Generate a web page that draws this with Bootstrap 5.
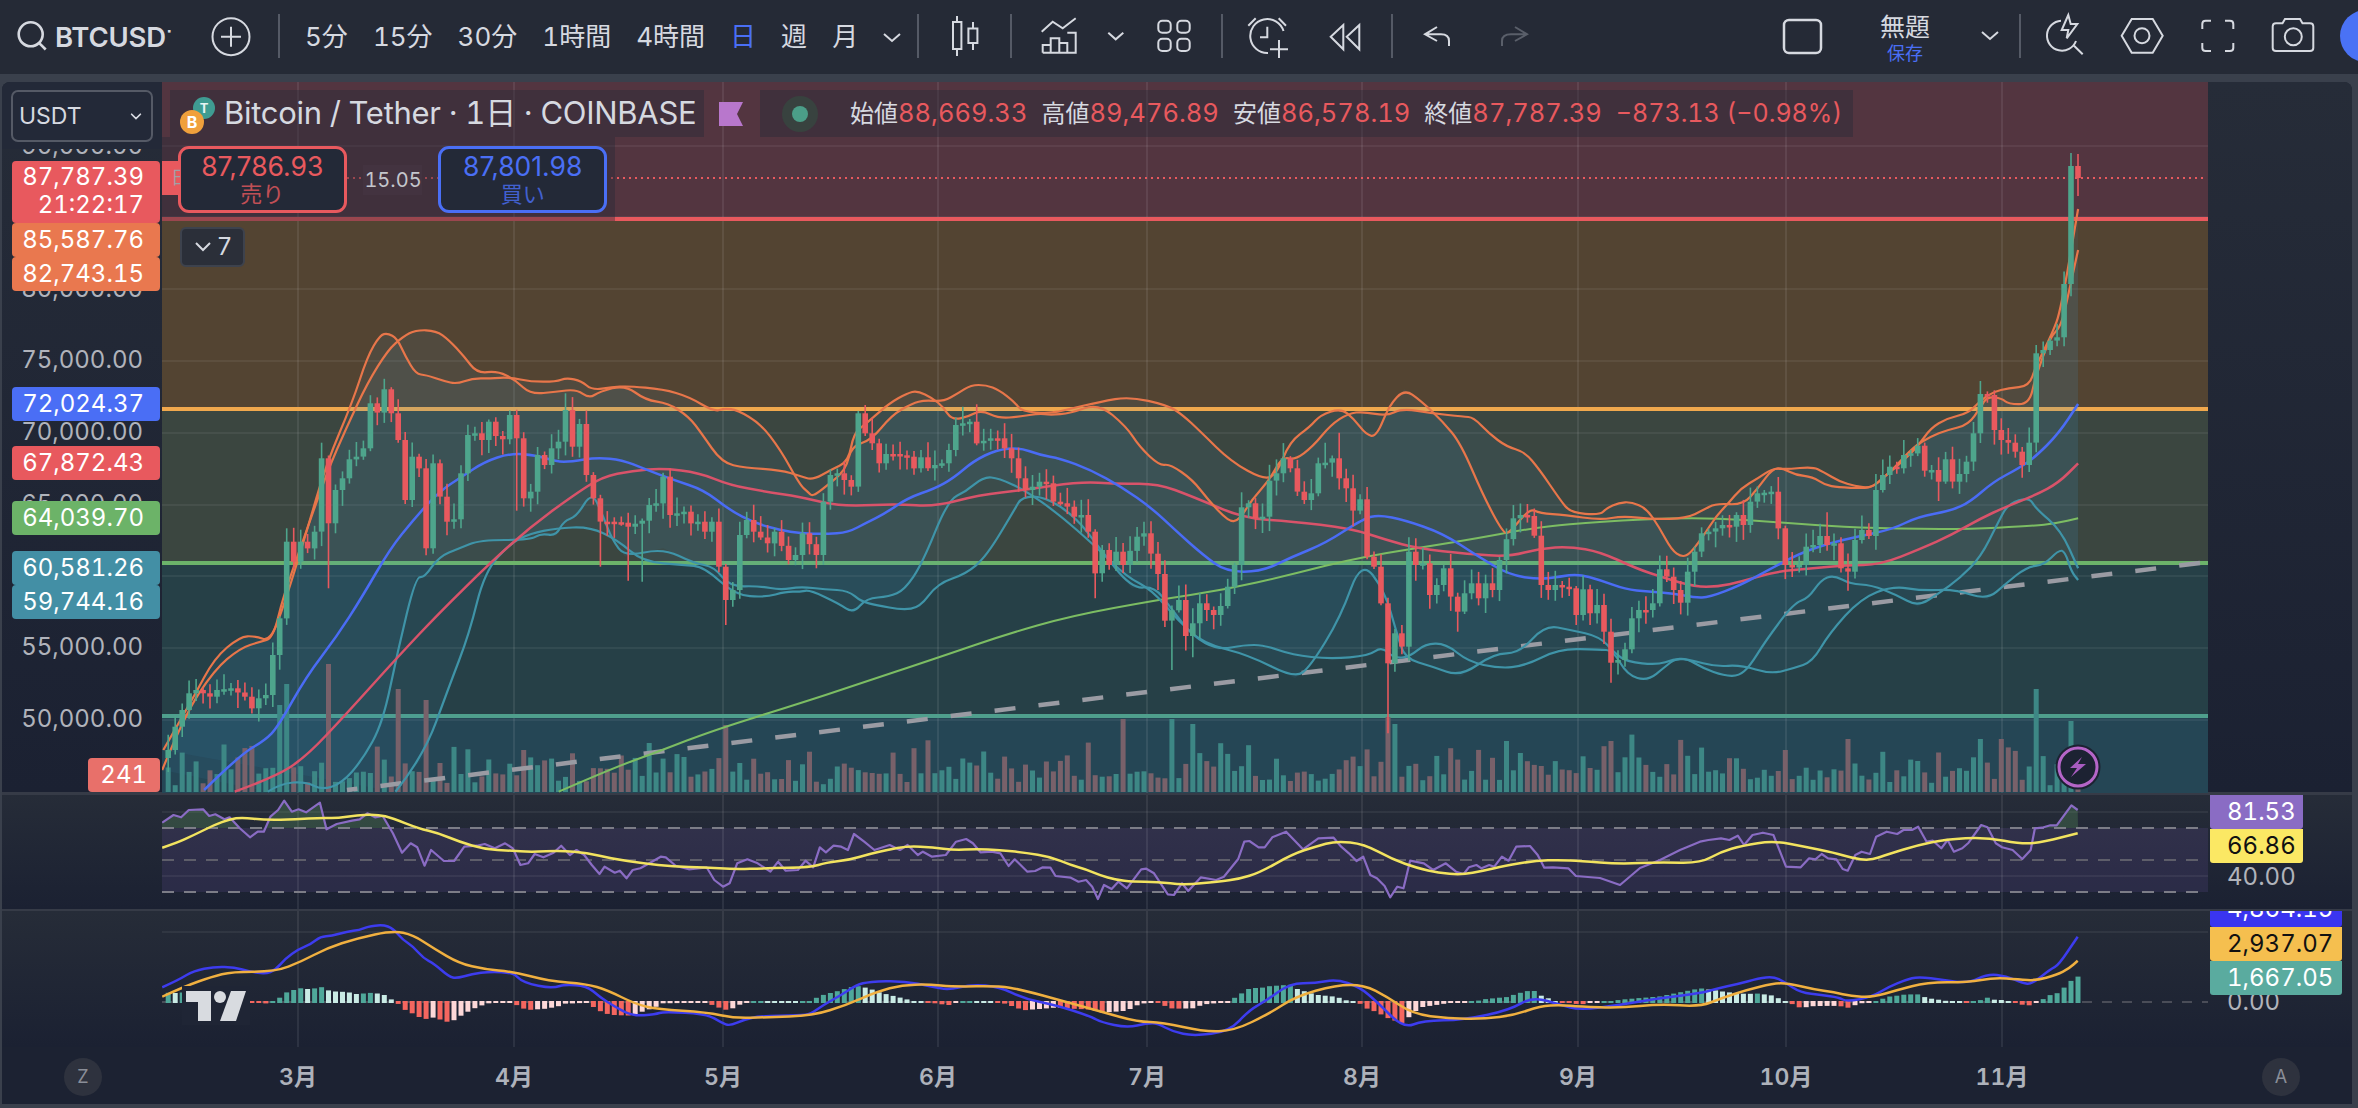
<!DOCTYPE html>
<html lang="ja">
<head>
  <meta charset="UTF-8">
  <title>BTCUSD Chart</title>
  <meta name="viewport" content="width=device-width, initial-scale=1">
  <link href="https://cdn.jsdelivr.net/npm/bootstrap@5.3.0/dist/css/bootstrap.min.css" rel="stylesheet">
  <style>
    body { background:#3a404c; overflow:hidden; height:1108px; font-family:Inter,"Noto Sans CJK JP",sans-serif; color:#d6d9e0; font-variant-numeric:tabular-nums; }
    .tb { height:74px; background:#252a36; overflow:hidden; flex-wrap:nowrap; justify-content:flex-start; padding:0; margin-bottom:8px; align-items:stretch; }
    .tb-ico { height:74px; fill:none; stroke:#d6d9e0; stroke-width:2; flex:none; }
    .tb-ico.dim { stroke:#5a5f6a; }
    .tb-sep { width:2px; height:44px; margin-top:14px; background:#555a66; flex:none; }
    .tb-sym { width:120px; font-size:27.5px; font-weight:600; line-height:74px; flex:none; letter-spacing:-.2px; }
    .tb-sym sup { font-size:9px; top:-1.5em; margin-left:1px; }
    .tb-tf { width:612px; flex:none; gap:25px; font-size:26px; line-height:74px; white-space:nowrap; }
    .tb-tf .on { color:#4a6ff5; }
    .tb-tf svg { margin-right:20px; }
    .tb-title { width:90px; flex:none; text-align:center; font-size:25px; line-height:1; padding-top:15px; }
    .tb-title span { display:block; font-size:18px; color:#4a6ff5; margin-top:5px; }
    .tb-ava { width:52px; height:52px; margin-top:10px; border-radius:50%; background:#4a72f5; flex:none; }
    .ml8{margin-left:8px}.ml17{margin-left:17px}.ml19{margin-left:19px}.ml23{margin-left:23px}.ml24{margin-left:24px}
    .ml25{margin-left:25px}.ml27{margin-left:27px}.ml28{margin-left:28px}.ml29{margin-left:29px}.ml30{margin-left:30px}
    .ml31{margin-left:31px}.ml33{margin-left:33px}.ml34{margin-left:34px}.ml36{margin-left:36px}.ml37{margin-left:37px}
    .ml38{margin-left:38px}.ml44{margin-left:44px}.ml252{margin-left:252px}

    .frame { width:2350px; height:1022px; margin-left:2px; border-radius:8px 8px 0 0; overflow:hidden; background:#1c2232; }
    .pane-row { display:flex; background:linear-gradient(#262c38,#1b2132); }
    .pane-main { height:710px; }
    .pane-rsi { height:117px; border-top:3px solid #363b47; }
    .pane-macd { height:138px; border-top:2px solid #363b47; }
    .pane-time { height:57px; background:#1c2232; }
    .ax-left { width:160px; flex:none; position:relative; overflow:hidden; }
    .ax-right { flex:1; position:relative; overflow:hidden; }
    .plot { width:2046px; flex:none; position:relative; }
    .plot svg { display:block; }
    .ax-text, .ax-tag { position:absolute; font-size:24px; line-height:34px; white-space:nowrap; }
    .ax-text { color:#b0b3bb; }
    .ax-left .ax-text { right:19px; }
    .ax-left .ax-tag { left:10px; width:148px; text-align:right; padding-right:16px; color:#fff; border-radius:4px; }
    .ax-right .ax-text { left:19px; }
    .ax-right .ax-tag { left:2px; padding-left:17px; color:#fff; border-radius:0 0 3px 3px; }
    .ax-tag.dark { color:#111; }
    .cur-wrap { position:absolute; left:0; top:0; width:160px; height:67px; background:#232938; z-index:3; padding:8px 0 0 9px; }
    .cur-select { width:142px; height:52px; background-color:#232938; border:2px solid #555a66; border-radius:7px; color:#d6d9e0; font-size:23px; padding:0 0 0 6px; background-position:right 8px center; background-size:14px;
      --bs-form-select-bg-img:url("data:image/svg+xml,%3csvg xmlns='http://www.w3.org/2000/svg' viewBox='0 0 16 16'%3e%3cpath fill='none' stroke='%23d6d9e0' stroke-linecap='round' stroke-width='2' d='m3 6 5 5 5-5'/%3e%3c/svg%3e"); }

    .legend-row { position:absolute; top:8px; left:8px; display:flex; height:47px; align-items:stretch; }
    .legend-box { background:rgba(37,42,55,.4); display:flex; align-items:center; white-space:nowrap; }
    .legend-title { width:534px; font-size:31px; padding-left:54px; position:relative; letter-spacing:-.3px; }
    .legend-title svg { position:absolute; left:8px; top:4px; }
    .legend-flag { width:24px; height:24px; margin:12px 17px 0 15px; flex:none; }
    .legend-ohlc { width:1093px; font-size:24px; position:relative; padding-left:90px; }
    .legend-ohlc svg { position:absolute; left:22px; top:6px; }
    .legend-ohlc b { font-weight:400; color:#e8595e; margin-right:14px; font-size:25.5px; }
    .legend-ohlc b.last { margin:0; font-size:25px; }
    .trade-row { position:absolute; top:55px; left:0; width:453px; height:84px; background:rgba(37,42,55,.4); display:flex; padding:9px 8px 0 16px; align-items:flex-start; }
    .trade-btn { width:169px; height:67px; padding:0; background:#232937; border-radius:11px; border:3px solid; font-size:26.5px; line-height:1.1; --bs-btn-hover-bg:#232937; }
    .trade-btn span { display:block; font-size:22px; line-height:26px; opacity:.8; }
    .trade-sell, .trade-sell:hover { border-color:#e8595e; color:#e8595e; }
    .trade-buy, .trade-buy:hover { border-color:#4a6ff5; color:#4a6ff5; }
    .trade-spread { width:92px; height:67px; display:flex; align-items:center; justify-content:center; font-size:20px; color:#c4c6cc; }
    .trade-spread span { background:#433340; padding:0 0 0 1px; }
    .trade-tag { position:absolute; left:0; top:24px; width:18px; height:34px; background:#e8595e; overflow:hidden; color:#a0a0a6; font-size:18px; line-height:34px; text-indent:9px; }
    .fold-btn { position:absolute; left:18px; top:145px; width:65px; height:40px; padding:0; background:#2b2f39; border:2px solid #3d424d; border-radius:6px; color:#d6d9e0; font-size:24px; line-height:1; display:flex; align-items:center; justify-content:center; gap:6px; --bs-btn-hover-bg:#2b2f39; --bs-btn-hover-color:#d6d9e0; --bs-btn-hover-border-color:#3d424d; }
    .time-text { position:absolute; top:13px; transform:translateX(-50%); font-size:23px; font-weight:600; color:#aeb2bb; white-space:nowrap; }
    .scale-mode { position:absolute; top:11px; width:38px; height:38px; border-radius:50%; background:#2e323e; color:#8a8e98; font-size:18px; line-height:38px; text-align:center; transform:translateX(-50%); }
  </style>
</head>
<body>

<!-- TOOLBAR -->
<nav class="navbar tb">
  <svg class="tb-ico ml17" width="30" viewBox="17 0 30 74"><circle cx="30.7" cy="34.3" r="12" stroke-width="2.6"/><path d="M39.5 43.3 45.7 49.5" stroke-width="2.6"/></svg>
  <div class="tb-sym ml8">BTCUSD<sup>▪</sup></div>
  <svg class="tb-ico ml36" width="40" viewBox="211 0 40 74"><circle cx="231" cy="36.7" r="18.5"/><path d="M221 36.7h20M231 26.7v20"/></svg>
  <div class="tb-sep ml27"></div>
  <div class="tb-tf d-flex ml25">
    <span>5分</span><span>15分</span><span>30分</span><span>1時間</span><span>4時間</span><span class="on">日</span><span>週</span><span>月</span>
    <svg class="tb-ico ms-auto" width="18" viewBox="879 0 18 74"><path d="M880 34l8 7 8-7"/></svg>
  </div>
  <div class="tb-sep"></div>
  <svg class="tb-ico ml31" width="30" viewBox="950 0 30 74"><rect x="953" y="22" width="8.4" height="27"/><path d="M957 16v6M957 49v7"/><rect x="968.4" y="28.5" width="9" height="14.5"/><path d="M973 22v6.5M973 43v7"/></svg>
  <div class="tb-sep ml30"></div>
  <svg class="tb-ico ml28" width="38" viewBox="1040 0 38 74"><path d="M1041.7 31.7 1052.7 21.7 1062.7 28.3 1075.7 18.3"/><path d="M1042.7 52.7V45H1050.7V52.7M1050.7 45V38.3H1059.3V52.7M1059.3 43H1067.3V52.7M1067.3 32.7H1075.7V52.7H1042.7"/></svg>
  <svg class="tb-ico ml28" width="20" viewBox="1106 0 20 74"><path d="M1108.3 32.7 1115.7 39.3 1123.3 32.7"/></svg>
  <svg class="tb-ico ml30" width="36" viewBox="1156 0 36 74"><rect x="1158.3" y="20.7" width="12.4" height="12" rx="4"/><rect x="1177.3" y="20.7" width="12.4" height="12" rx="4"/><rect x="1158.3" y="38.7" width="12.4" height="12.3" rx="4"/><rect x="1177.3" y="38.7" width="12.4" height="12.3" rx="4"/></svg>
  <div class="tb-sep ml29"></div>
  <svg class="tb-ico ml23" width="44" viewBox="1246 0 44 74"><path d="M1283.5 31A17 17 0 1 0 1268 53"/><path d="M1248.3 25.7 1255.7 18.3M1278.7 18.3 1286 25.7M1267.3 26.7V37.3H1260M1270 49.3H1288M1279 40V58"/></svg>
  <svg class="tb-ico ml38" width="34" viewBox="1328 0 34 74"><path d="M1343.3 25 1330.7 36.7 1343.3 49.3ZM1359.3 25 1346.7 36.7 1359.3 49.3Z"/></svg>
  <div class="tb-sep ml29"></div>
  <svg class="tb-ico ml29" width="30" viewBox="1422 0 30 74"><path d="M1437 27 1425 34.3 1437 41M1425 34.3H1441Q1449 34.3 1449 41V46"/></svg>
  <svg class="tb-ico dim ml44" width="34" viewBox="1496 0 34 74"><path d="M1515 27 1527 34.3 1515 41M1527 34.3H1511Q1502 34.3 1502 41V46"/></svg>
  <svg class="tb-ico ml252" width="41" viewBox="1782 0 41 74"><rect x="1784" y="20" width="37" height="33" rx="5" stroke-width="2.5"/></svg>
  <div class="tb-title ml37">無題<span>保存</span></div>
  <svg class="tb-ico ml30" width="20" viewBox="1980 0 20 74"><path d="M1982 32l8 7 8-7"/></svg>
  <div class="tb-sep ml19"></div>
  <svg class="tb-ico ml24" width="42" viewBox="2045 0 42 74"><path d="M2061 20.7A15 15 0 1 0 2076 41M2074 45.7 2082.7 54.3M2068.3 15 2061.7 30H2068.3L2066.7 38.3 2077.3 24H2070.7Z"/></svg>
  <svg class="tb-ico ml33" width="44" viewBox="2120 0 44 74"><path d="M2121.7 35.7 2131.7 19H2152.7L2162.7 35.7 2152.7 52.7H2131.7Z"/><circle cx="2142" cy="35.7" r="7.5"/></svg>
  <svg class="tb-ico ml36" width="36" viewBox="2200 0 36 74"><path d="M2202.3 29V24Q2202.3 20.7 2205.6 20.7H2211M2225 20.7H2230Q2233.3 20.7 2233.3 24V29M2233.3 43V48Q2233.3 51 2230 51H2225M2211 51H2205.6Q2202.3 51 2202.3 48V43"/></svg>
  <svg class="tb-ico ml34" width="45" viewBox="2270 0 45 74"><path d="M2276 23.3H2282.5L2285 19H2300L2302.5 23.3H2310Q2313.3 23.3 2313.3 26.6V48Q2313.3 51 2310 51H2276Q2272.7 51 2272.7 48V26.6Q2272.7 23.3 2276 23.3Z"/><circle cx="2293.3" cy="36.7" r="8.5"/></svg>
  <div class="tb-ava ml25"></div>
</nav>

<!-- CHART -->
<div class="frame">
  <div class="pane-row pane-main">
    <div class="ax-left" id="axMain">
      <div class="cur-wrap"><select class="form-select cur-select"><option>USDT</option></select></div>
    </div>
    <div class="plot">
      <div id="svgMain"></div>
      <div class="legend-row">
        <div class="legend-box legend-title">
          <svg width="46" height="42" viewBox="0 0 46 42"><circle cx="26" cy="14" r="11" fill="#3f9c92"/><text x="26" y="19" font-size="13" font-weight="700" fill="#e8f4f2" text-anchor="middle">T</text><circle cx="14" cy="28" r="12" fill="#f0a03c"/><text x="14" y="34" font-size="16" font-weight="700" fill="#fff" text-anchor="middle">B</text></svg>
          Bitcoin / Tether · 1日 · COINBASE
        </div>
        <svg class="legend-flag" viewBox="0 0 24 24"><path d="M0 0H24L18 12 24 24H0Z" fill="#b877cc"/></svg>
        <div class="legend-box legend-ohlc">
          <svg width="36" height="36" viewBox="0 0 36 36"><circle cx="18" cy="18" r="18" fill="#38423f"/><circle cx="18" cy="18" r="8" fill="#4b9e88"/></svg>
          始値<b>88,669.33</b>高値<b>89,476.89</b>安値<b>86,578.19</b>終値<b>87,787.39</b><b class="last">−873.13 (−0.98%)</b>
        </div>
      </div>
      <div class="trade-row">
        <div class="trade-tag">日</div>
        <button type="button" class="btn trade-btn trade-sell">87,786.93<span>売り</span></button>
        <div class="trade-spread"><span>15.05</span></div>
        <button type="button" class="btn trade-btn trade-buy">87,801.98<span>買い</span></button>
      </div>
      <button type="button" class="btn fold-btn"><svg width="18" height="12" viewBox="0 0 18 12" fill="none" stroke="#d6d9e0" stroke-width="2"><path d="M2 2l7 7 7-7"/></svg>7</button>
    </div>
    <div class="ax-right"></div>
  </div>

  <div class="pane-row pane-rsi">
    <div class="ax-left"></div>
    <div class="plot" id="svgRsi"></div>
    <div class="ax-right" id="axRsi"></div>
  </div>

  <div class="pane-row pane-macd">
    <div class="ax-left"></div>
    <div class="plot" id="svgMacd"></div>
    <div class="ax-right" id="axMacd"></div>
  </div>

  <div class="pane-row pane-time position-relative" id="axTime">
    <div class="scale-mode" id="modeZ">Z</div>
    <div class="scale-mode" id="modeA">A</div>
  </div>
</div>

<script src="https://cdn.jsdelivr.net/npm/bootstrap@5.3.0/dist/js/bootstrap.bundle.min.js"></script>

<script>
  // points were read off the reference, each list in its own crop scale
  const crop = (x0, sx, y0) => (list) => list.map(([a, b]) => [x0 + a / sx, y0 + b / 3]);
  const A = crop(0, 1.96, 300), B = crop(800, 1.96, 300), D = crop(1560, 2.376, 300);
  const R1 = crop(0, 1.96, 780), R2 = crop(780, 1.96, 790), R3 = crop(1700, 2.383, 700);

  const N = 275;
  const barX = (i) => 2078 - (N - 1 - i) * 6.97;
  const barOf = (x) => Math.max(0, Math.min(N - 1, Math.round((x - barX(0)) / 6.97)));
  let seed = 12345;
  const rnd = () => { seed = (seed * 16807) % 2147483647; return seed / 2147483647; };

  const RED = "#e8595e", GREEN = "#4ea58c";

  const closes = [
    ...A([[325,1350],[340,1280],[366,1180],[380,1170],[405,1190],[420,1170],[450,1165],[475,1190],[490,1225],[505,1195],[520,1185],[530,1065],[545,955],[557,725],[570,785],[583,725],[598,745],[612,695],[625,475],[640,670],[653,570],[665,535],[680,478],[695,470],[708,445],[720,310],[735,338],[750,268],[763,340],[777,420],[790,600],[803,470],[817,505],[830,745],[845,490],[858,590],[870,665],[883,658],[897,520],[912,405],[925,400],[940,420],[952,365],[966,408],[980,418],[993,345],[1007,415],[1020,595],[1035,575],[1048,465],[1062,495],[1075,445],[1090,425],[1103,330],[1117,440],[1130,372],[1143,400],[1156,525],[1170,665],[1184,585],[1197,665],[1211,668],[1225,770],[1238,680],[1252,662],[1266,615],[1280,610],[1293,530],[1307,550],[1320,645],[1335,635],[1348,670],[1362,665],[1376,695],[1390,665],[1403,800],[1417,900],[1430,870],[1444,705],[1457,655],[1470,660],[1484,695],[1498,730],[1512,780],[1525,695],[1540,780],[1554,765]]),
    ...B([[10,700],[26,765],[40,560],[52,605],[66,525],[80,520],[94,560],[108,340],[122,400],[135,430],[149,490],[162,462],[176,430],[189,462],[203,423],[216,470],[230,505],[243,472],[257,505],[270,495],[284,490],[298,450],[312,375],[326,350],[339,365],[353,430],[367,430],[380,415],[394,415],[408,520],[421,475],[435,535],[448,570],[462,560],[475,545],[489,550],[503,605],[516,610],[530,620],[543,650],[557,645],[570,695],[584,820],[598,750],[612,795],[626,755],[640,795],[654,810],[667,710],[681,700],[695,740],[708,822],[722,962],[736,975],[749,900],[763,1008],[775,970],[789,910],[802,930],[816,945],[830,918],[843,860],[857,795],[871,622],[884,610],[898,655],[912,650],[926,542],[940,520],[953,475],[967,505],[981,575],[995,600],[1008,580],[1022,490],[1035,488],[1048,475],[1062,535],[1075,565],[1089,632],[1103,598],[1116,770],[1130,800],[1144,910],[1157,1090],[1171,1000],[1185,1040],[1198,755],[1212,795],[1226,790],[1240,885],[1253,855],[1267,805],[1281,890],[1294,935],[1308,880],[1321,850],[1335,895],[1349,850],[1362,870],[1376,780],[1403,655],[1417,645],[1430,648],[1444,707],[1457,855],[1471,870],[1485,855],[1498,860]]),
    ...D([[9,860],[26,865],[42,945],[59,868],[76,940],[92,915],[109,995],[126,1088],[142,1080],[158,1048],[174,955],[190,930],[207,930],[223,910],[240,808],[257,830],[273,870],[290,908],[306,815],[323,755],[340,700],[356,695],[373,685],[389,675],[406,680],[423,645],[440,675],[456,605],[473,580],[489,578],[505,575],[521,685],[538,795],[554,800],[571,795],[587,740],[604,735],[620,708],[637,735],[654,730],[670,805],[687,815],[703,720],[720,690],[737,708],[753,570],[770,525],[786,500],[803,505],[820,465],[836,460],[852,437],[868,512],[885,510],[901,545],[918,478],[934,545],[950,522],[967,485],[984,400],[1000,282],[1017,285],[1033,390],[1050,420],[1067,428],[1084,455],[1100,495],[1117,428],[1133,160],[1150,150],[1167,122],[1183,112],[1200,-48],[1216,-402],[1231,-366]])
  ];
  const close = new Array(N).fill(null);
  closes.forEach(([x, y]) => { close[barOf(x)] = y; });
  close.forEach((v, i) => {
    if (v !== null) return;
    let a = i - 1, b = i + 1;
    while (b < N && close[b] === null) b++;
    close[i] = (close[a] + close[b]) / 2;
  });

  const highs = {}, lows = {};
  A([[1103,280]]).forEach(([x, y]) => highs[barOf(x)] = y);
  B([[122,315],[352,313],[325,320],[1060,398],[1033,428],[1400,615],[1430,612],[1198,712],[680,665]]).forEach(([x, y]) => highs[barOf(x)] = y);
  D([[1000,243],[636,637]]).forEach(([x, y]) => highs[barOf(x)] = y);
  highs[274] = 154; highs[273] = 153;
  A([[640,865],[1170,800],[1417,975],[1225,842],[1252,845],[1035,635],[1018,632]]).forEach(([x, y]) => lows[barOf(x)] = y);
  B([[735,1110],[584,895],[1157,1300],[1294,995],[775,1072]]).forEach(([x, y]) => lows[barOf(x)] = y);
  D([[126,1148],[900,603],[687,872],[1100,533],[170,1060]]).forEach(([x, y]) => lows[barOf(x)] = y);
  lows[274] = 196;

  const volumes = {};
  A([[640,128],[557,108],[775,103],[832,92],[545,87],[1417,67]]).forEach(([x, h]) => volumes[barOf(x)] = (h - 300) * 3);
  B([[640,73],[735,73],[770,68],[1157,75],[1170,68]]).forEach(([x, h]) => volumes[barOf(x)] = (h - 300) * 3);
  D([[1133,103],[1216,71],[688,53],[126,51],[538,42],[1050,53],[1000,53]]).forEach(([x, h]) => volumes[barOf(x)] = (h - 300) * 3);

  const upper1 = [
    ...A([[318,1410],[360,1250],[420,1110],[470,1045],[510,1025],[535,1015],[555,890],[590,740],[640,520],[680,380],[720,250],[760,150],[790,110],[815,90],[855,92],[880,120],[910,170],[935,220],[975,213],[1010,240],[1040,283],[1090,275],[1130,268],[1155,295],[1175,275],[1225,255],[1265,300],[1310,310],[1350,350],[1375,400],[1415,488],[1460,503],[1530,510]]),
    ...B([[0,528],[25,540],[60,510],[95,485],[105,400],[130,370],[175,310],[210,280],[230,272],[260,295],[280,320],[298,360],[330,350],[355,330],[390,355],[430,350],[470,340],[490,345],[530,340],[585,310],[640,380],[665,440],[705,497],[725,492],[770,540],[800,600],[840,665],[860,662],[885,600],[920,540],[945,470],[970,480],[1005,440],[1040,375],[1075,340],[1105,335],[1150,348],[1180,325],[1240,340],[1300,350],[1320,352],[1350,400],[1385,440],[1420,455],[1450,510],[1490,600],[1510,638],[1568,645]]),
    ...D([[110,625],[140,608],[170,606],[205,625],[235,680],[265,750],[290,772],[310,760],[345,700],[370,650],[400,610],[430,565],[470,535],[505,505],[540,508],[600,500],[625,515],[665,545],[700,558],[740,565],[770,530],[800,500],[850,440],[880,385],[920,355],[970,340],[1000,300],[1030,275],[1065,265],[1115,258],[1130,200],[1170,100],[1190,30],[1231,-273]])
  ];
  const upper2 = [
    ...A([[320,1350],[380,1190],[420,1075],[470,1010],[500,1008],[530,1025],[560,900],[600,700],[640,490],[690,310],[720,170],[745,105],[760,100],[778,115],[795,170],[815,222],[835,225],[870,243],[895,252],[925,235],[960,235],[1000,232],[1040,245],[1090,245],[1110,233],[1140,243],[1160,270],[1200,262],[1230,258],[1300,268],[1350,290],[1400,335],[1420,325],[1445,330],[1490,370],[1530,450]]),
    ...B([[0,555],[15,575],[25,590],[50,560],[90,510],[100,440],[140,420],[180,345],[220,310],[245,300],[280,305],[310,280],[335,255],[365,255],[390,270],[420,305],[435,335],[490,340],[520,330],[590,305],[645,290],[720,315],[750,345],[785,395],[845,485],[910,540],[935,520],[960,425],[1000,380],[1020,345],[1060,325],[1085,355],[1110,405],[1130,410],[1155,315],[1185,268],[1215,300],[1260,365],[1295,430],[1340,590],[1378,698],[1390,700],[1430,625],[1450,640],[1500,645],[1568,660]]),
    ...D([[150,648],[220,658],[300,655],[340,630],[370,610],[435,615],[470,565],[505,505],[530,505],[560,525],[600,530],[630,555],[660,562],[720,565],[745,560],[790,510],[840,440],[880,410],[920,390],[970,375],[1000,320],[1015,290],[1050,295],[1065,312],[1115,313],[1130,230],[1165,110],[1190,80],[1205,0],[1231,-150]])
  ];
  const lower1 = [
    ...A([[525,1475],[550,1450],[600,1445],[630,1470],[670,1450],[710,1380],[750,1270],[780,1050],[815,830],[832,833],[860,770],[900,745],[940,720],[1040,720],[1060,700],[1090,708],[1105,662],[1130,650],[1160,575],[1180,640],[1200,720],[1225,770],[1300,745],[1360,790],[1400,800],[1430,860],[1490,858],[1530,870]]),
    ...B([[0,860],[50,868],[95,872],[120,905],[150,915],[200,930],[235,922],[270,850],[325,822],[365,770],[420,630],[435,590],[480,590],[540,650],[590,750],[650,865],[695,860],[725,920],[770,1010],[820,1050],[870,1035],[910,1035],[965,1065],[1040,1077],[1115,1067],[1140,1040],[1165,1075],[1195,1070],[1225,1032],[1265,1030],[1310,1085],[1370,1105],[1420,1098],[1490,1045],[1568,1050]]),
    ...D([[125,1050],[160,1125],[208,1143],[250,1100],[275,1075],[310,1080],[370,1100],[430,1095],[500,1122],[555,1105],[600,1085],[640,1000],[715,895],[790,858],[860,872],[940,868],[1015,900],[1060,850],[1110,800],[1150,795],[1185,750],[1200,755],[1215,815],[1231,840]])
  ];
  const lower2 = [
    ...A([[775,1475],[830,1370],[880,1160],[920,1000],[950,815],[1000,730],[1040,700],[1090,685],[1155,680],[1210,720],[1260,785],[1340,795],[1380,800],[1440,885],[1500,892],[1540,875]]),
    ...B([[0,875],[20,870],[75,910],[105,940],[130,895],[175,890],[205,870],[240,790],[290,600],[325,575],[360,530],[390,535],[440,570],[505,640],[580,740],[640,830],[690,870],[740,960],[790,1030],[880,1065],[970,1135],[1000,1100],[1060,950],[1100,780],[1145,870],[1170,1000],[1185,1075],[1240,1100],[1295,1130],[1360,1060],[1410,1060],[1460,975],[1510,990],[1568,1010]]),
    ...D([[130,1060],[160,1085],[230,1095],[270,1078],[300,1075],[340,1105],[390,1127],[425,1128],[450,1100],[490,1020],[555,910],[590,895],[620,840],[650,825],[690,852],[740,855],[800,885],[850,920],[900,880],[950,835],[1000,770],[1040,670],[1065,610],[1115,592],[1130,625],[1190,690],[1231,805]])
  ];
  const maBlue = [
    ...A([[400,1470],[470,1365],[520,1320],[545,1280],[600,1130],[660,1010],[710,890],[765,745],[810,660],[860,575],[905,530],[950,485],[1000,460],[1050,465],[1090,485],[1120,485],[1170,472],[1220,480],[1260,505],[1320,540],[1380,570],[1430,630],[1480,670],[1530,690]]),
    ...B([[0,700],[50,702],[95,697],[130,668],[165,642],[210,595],[265,565],[300,535],[340,483],[385,450],[430,443],[470,465],[510,475],[570,510],[630,560],[690,625],[735,690],[790,765],[835,815],[905,815],[965,770],[1030,730],[1105,655],[1135,645],[1185,660],[1260,700],[1330,770],[1390,825],[1450,838],[1490,830],[1525,822],[1568,840]]),
    ...D([[155,868],[210,875],[270,880],[320,893],[355,892],[430,855],[480,820],[570,760],[640,730],[700,712],[790,688],[850,650],[930,632],[975,605],[1030,545],[1090,505],[1130,470],[1185,400],[1231,312]])
  ];
  const maRed = [
    ...A([[460,1475],[540,1430],[600,1370],[680,1240],[780,1070],[860,940],[960,790],[1040,680],[1120,590],[1180,530],[1240,512],[1300,505],[1370,518],[1430,555],[1500,575]]),
    ...B([[0,590],[50,610],[100,618],[190,612],[265,620],[350,585],[440,570],[550,545],[620,552],[700,550],[770,590],[870,655],[960,663],[1080,685],[1150,720],[1210,745],[1310,762],[1390,770],[1450,745],[1510,740],[1568,755]]),
    ...D([[180,805],[250,835],[320,860],[375,860],[430,845],[510,815],[600,805],[680,795],[760,795],[860,745],[930,705],[1000,655],[1060,620],[1130,585],[1185,548],[1231,490]])
  ];
  const maGreen = [
    ...A([[1095,1475],[1200,1405],[1290,1355],[1400,1290]]),
    ...B([[0,1210],[100,1160],[280,1068],[400,1005],[530,948],[700,900],[830,870],[960,825],[1100,770],[1290,725],[1450,680],[1568,665]]),
    ...D([[300,652],[450,660],[600,675],[750,685],[960,688],[1120,678],[1180,670],[1231,655]])
  ];

  const rsi = [
    ...R1([[318,128],[340,105],[355,112],[370,90],[398,88],[410,108],[422,103],[440,118],[450,112],[470,145],[490,172],[505,155],[517,155],[530,110],[545,90],[557,62],[572,95],[585,88],[600,97],[627,68],[640,148],[660,132],[690,122],[705,118],[720,100],[735,112],[750,108],[770,160],[788,218],[805,190],[818,202],[832,257],[845,210],[870,243],[890,243],[910,200],[935,197],[950,192],[970,205],[990,190],[1005,205],[1020,255],[1035,250],[1048,222],[1065,232],[1085,218],[1100,197],[1117,225],[1130,210],[1145,225],[1160,255],[1175,282],[1185,260],[1205,278],[1215,272],[1228,295],[1240,270],[1255,265],[1270,252],[1295,230],[1305,232],[1325,258],[1350,268],[1385,262],[1400,300],[1417,320],[1430,310],[1445,250],[1465,238],[1485,250],[1510,275],[1525,245],[1540,272]]),
    ...R2([[35,240],[50,212],[65,232],[78,172],[90,187],[105,167],[120,170],[133,180],[145,132],[165,155],[185,180],[215,165],[235,180],[250,165],[270,195],[280,185],[298,200],[325,195],[345,155],[365,147],[378,160],[393,187],[415,185],[432,190],[448,228],[460,208],[485,245],[500,243],[515,232],[530,233],[540,258],[570,263],[585,275],[600,270],[612,290],[623,327],[635,285],[650,297],[663,275],[680,295],[708,238],[718,236],[733,250],[760,313],[772,315],[788,280],[800,303],[825,262],[855,270],[870,260],[898,207],[910,155],[920,153],[938,172],[950,172],[965,142],[992,125],[1025,178],[1055,145],[1085,143],[1100,170],[1115,190],[1130,213],[1143,200],[1157,255],[1170,265],[1185,288],[1196,322],[1210,290],[1222,295],[1235,212],[1262,220],[1280,240],[1305,220],[1325,245],[1340,252],[1350,232],[1365,225],[1375,235],[1390,225],[1400,230],[1415,200],[1428,212],[1443,170],[1470,168],[1485,195],[1498,233],[1515,232],[1545,235],[1560,258]]),
    [1600,878],[1620,885],[1640,868],[1660,860],[1680,850],
    ...R3([[0,425],[20,420],[50,415],[70,420],[90,407],[105,435],[125,405],[150,398],[175,405],[205,500],[240,502],[260,475],[275,478],[290,462],[305,475],[325,478],[340,507],[352,512],[370,465],[385,455],[405,462],[420,410],[445,395],[470,402],[485,390],[505,390],[520,380],[540,425],[555,422],[575,445],[590,420],[605,455],[625,445],[640,428],[670,375],[685,382],[705,430],[720,442],[745,450],[768,477],[788,450],[798,385],[815,383],[835,376],[850,376],[885,316],[900,330]])
  ];
  const rsiMa = [
    ...R1([[318,203],[345,190],[380,165],[420,135],[450,118],[475,112],[520,120],[580,118],[630,113],[660,115],[700,105],[740,103],[770,115],[820,145],[860,160],[900,185],[950,208],[1000,212],[1040,216],[1100,212],[1150,218],[1200,236],[1260,250],[1320,260],[1380,262],[1440,268],[1500,265]]),
    ...R2([[60,232],[90,218],[135,210],[175,192],[210,180],[250,168],[300,172],[340,180],[385,177],[430,180],[480,188],[530,200],[570,225],[600,238],[625,255],[660,270],[690,275],[740,275],[790,285],[860,275],[900,267],[940,248],[1005,192],[1050,170],[1090,153],[1145,162],[1200,208],[1250,235],[1290,248],[1335,255],[1380,242],[1420,228],[1480,212],[1530,210],[1568,213]]),
    [1620,864],[1660,862],
    ...R3([[0,490],[50,455],[100,437],[175,422],[250,440],[320,458],[360,473],[405,482],[450,462],[520,435],[585,418],[680,411],[770,433],[820,425],[900,400]])
  ];
  const macdLine = [
    ...R1([[318,622],[350,600],[380,572],[420,560],[460,562],[490,575],[520,582],[540,570],[560,535],[585,508],[610,492],[628,470],[650,468],[680,455],[705,450],[720,440],[750,434],[770,445],[790,480],[810,500],[830,535],[850,550],[880,590],[895,595],[925,582],[960,575],[1005,578],[1020,600],[1040,613],[1070,622],[1090,622],[1105,614],[1150,617],[1175,650],[1205,680],[1240,708],[1285,703],[1300,695],[1385,702],[1415,728],[1430,738],[1460,718],[1490,708]]),
    ...R2([[40,676],[60,672],[85,645],[120,615],[150,585],[175,575],[240,572],[300,590],[330,600],[375,583],[430,590],[480,627],[540,645],[610,680],[630,697],[680,713],[720,700],[740,700],[770,725],[810,738],[880,725],[920,660],[950,635],[1000,580],[1050,580],[1090,568],[1135,590],[1170,635],[1222,715],[1260,692],[1340,690],[1430,660],[1475,620],[1530,645],[1568,660]]),
    [1620,1005],[1660,998],
    ...R3([[0,880],[40,866],[90,852],[140,835],[175,830],[200,845],[240,878],[290,885],[330,892],[350,905],[410,890],[450,860],[490,840],[520,830],[580,840],[640,850],[685,822],[730,828],[770,850],[790,853],[835,808],[855,795],[900,710]])
  ];
  const macdSignal = [
    ...R1([[318,650],[360,620],[415,590],[455,575],[540,575],[590,545],[640,505],[700,475],[770,452],[810,465],[850,505],[900,550],[950,568],[1005,575],[1075,603],[1150,612],[1190,630],[1245,672],[1290,688],[1385,697],[1440,715],[1500,712]]),
    ...R2([[65,677],[130,645],[190,605],[240,585],[290,583],[340,590],[430,588],[470,598],[560,635],[630,665],[700,695],[750,697],[830,725],[890,722],[960,670],[1010,620],[1090,585],[1145,585],[1190,620],[1240,672],[1310,685],[1380,687],[1440,675],[1490,648],[1530,645],[1568,650]]),
    [1620,1008],[1660,1004],
    ...R3([[0,920],[50,895],[110,870],[175,850],[210,850],[270,868],[320,877],[360,888],[410,892],[470,870],[540,847],[640,847],[700,833],[760,838],[800,842],[850,825],[880,805],[900,782]])
  ];

  const smooth = (p) => {
    let d = "M" + p[0][0].toFixed(1) + " " + p[0][1].toFixed(1);
    for (let i = 1; i < p.length - 1; i++) {
      const mx = (p[i][0] + p[i + 1][0]) / 2, my = (p[i][1] + p[i + 1][1]) / 2;
      d += "Q" + p[i][0].toFixed(1) + " " + p[i][1].toFixed(1) + " " + mx.toFixed(1) + " " + my.toFixed(1);
    }
    const e = p[p.length - 1];
    return d + "L" + e[0].toFixed(1) + " " + e[1].toFixed(1);
  };
  const curve = (p, color, w) => `<path d="${smooth(p)}" fill="none" stroke="${color}" stroke-width="${w}" stroke-linejoin="round"/>`;
  const poly = (p) => p.map((q) => q[0].toFixed(1) + "," + q[1].toFixed(1)).join(" ");
  const rect = (x, y, w, h, fill) => `<rect x="${x}" y="${y}" width="${w}" height="${h}" fill="${fill}"/>`;
  const hline = (y, dash, color, w) => `<line x1="162" x2="2208" y1="${y}" y2="${y}" stroke="${color}" stroke-width="${w}" ${dash ? `stroke-dasharray="${dash}"` : ""}/>`;
  const months = [["3月",298],["4月",514],["5月",723],["6月",938],["7月",1147],["8月",1362],["9月",1578],["10月",1786],["11月",2002]];
  const vgrid = (y1, y2) => months.map((m) => `<line x1="${m[1]}" x2="${m[1]}" y1="${y1}" y2="${y2}" stroke="rgba(255,255,255,.08)" stroke-width="2"/>`).join("");
  const band = (top, bottom) => `<polygon points="${poly(top)} ${poly([...bottom].reverse())}" fill="rgba(60,150,200,.08)"/>`;
  const svg = (y, h, body) => `<svg width="2046" height="${h}" viewBox="162 ${y} 2046 ${h}">${body}</svg>`;

  // main pane
  let main = "";
  main += rect(162, 82, 2046, 136, "#533540") + rect(162, 218, 2046, 190, "#534432") + rect(162, 408, 2046, 155, "#3b4640");
  main += rect(162, 563, 2046, 153, "#264047") + rect(162, 716, 2046, 77, "#254655");
  [146, 217, 289, 361, 433, 505, 576, 648, 720].forEach((y) => main += hline(y, "", "rgba(255,255,255,.06)", 2));
  main += vgrid(82, 793);
  main += hline(219, "", RED, 4) + hline(409, "", "#f0a84d", 4) + hline(563, "", "#6cb36a", 4) + hline(716, "", "#4f9f8d", 4);
  main += `<line x1="347" x2="2205" y1="178" y2="178" stroke="${RED}" stroke-width="2" stroke-dasharray="2 4"/>`;
  main += band(upper1, lower1) + band(upper2, lower2);

  const open = close.map((c, i) => (i ? close[i - 1] : c + 8));
  for (let i = 0; i < N; i++) {
    const up = close[i] < open[i];
    let h = volumes[i] ? 792 - volumes[i] : 792 - (6 + rnd() * rnd() * 42 + rnd() * 16);
    main += rect((barX(i) - 2.5).toFixed(1), h.toFixed(1), 5, (792 - h).toFixed(1), up ? "#3d8785" : "#78616a");
  }
  main += `<line x1="2200" y1="563" x2="347" y2="790" stroke="#9a9ba3" stroke-width="4.5" stroke-dasharray="21 23.2"/>`;
  main += curve(maGreen, "#7cbd63", 2);
  main += curve(lower1, "#3f94a8", 2.2) + curve(lower2, "#3f94a8", 2.2);
  main += curve(maRed, "#d9536a", 2.5) + curve(maBlue, "#4a6cf5", 2.5);
  main += curve(upper1, "#e8764a", 2.2) + curve(upper2, "#e8764a", 2.2);
  for (let i = 0; i < N; i++) {
    const up = close[i] < open[i], col = up ? GREEN : RED, x = barX(i);
    const t = Math.min(open[i], close[i]), b = Math.max(open[i], close[i]);
    const hi = highs[i] || t - 2 - rnd() * 14, lo = lows[i] || b + 2 + rnd() * 14;
    main += `<line x1="${x.toFixed(1)}" x2="${x.toFixed(1)}" y1="${hi.toFixed(1)}" y2="${lo.toFixed(1)}" stroke="${col}" stroke-width="1.6"/>`;
    main += rect((x - 2.8).toFixed(1), t.toFixed(1), 5.6, Math.max(2.5, b - t).toFixed(1), col);
  }
  main += `<circle cx="2078" cy="767" r="21" fill="#1c2232" stroke="#1c2232" stroke-width="3"/><circle cx="2078" cy="767" r="19" fill="#1c2232" stroke="#b565c8" stroke-width="3"/><polygon points="2082,757 2070,768 2077,768 2071,777 2086,764 2078,764" fill="#a85cc0"/>`;
  document.getElementById("svgMain").innerHTML = svg(82, 711, main);

  // rsi pane
  let rs = `<defs><clipPath id="overb"><rect x="162" y="795" width="2046" height="33"/></clipPath></defs>`;
  rs += rect(162, 828, 2046, 64, "rgba(136,100,200,.14)");
  rs += hline(812, "", "rgba(255,255,255,.06)", 2) + hline(876, "", "rgba(255,255,255,.06)", 2) + vgrid(795, 909);
  rs += `<polygon clip-path="url(#overb)" points="${poly(rsi)} 2078,828 162,828" fill="rgba(100,170,100,.25)"/>`;
  [828, 892].forEach((y) => rs += hline(y, "12 10", "#7c7d87", 2));
  rs += hline(860, "12 10", "#5e5e6a", 2);
  rs += `<polyline points="${poly(rsi)}" fill="none" stroke="#8a6cc4" stroke-width="2.2" stroke-linejoin="round"/>`;
  rs += curve(rsiMa, "#f2e35f", 2.5);
  document.getElementById("svgRsi").innerHTML = svg(795, 114, rs);

  // macd pane
  const at = (p, x) => {
    if (x <= p[0][0]) return p[0][1];
    for (let i = 1; i < p.length; i++) {
      if (x <= p[i][0]) return p[i - 1][1] + (p[i][1] - p[i - 1][1]) * (x - p[i - 1][0]) / (p[i][0] - p[i - 1][0]);
    }
    return p[p.length - 1][1];
  };
  let mc = hline(932, "", "rgba(255,255,255,.06)", 2) + vgrid(911, 1047) + hline(1002, "10 10", "#4a4d58", 2);
  let prev = 0;
  for (let i = 0; i < N; i++) {
    const x = barX(i), d = (at(macdSignal, x) - at(macdLine, x)) * 1.1;
    const col = d > 0 ? (d > prev ? "#4fa89a" : "#c9ebe5") : (d < prev ? "#f4665f" : "#fdd8d8");
    const h = Math.max(2, Math.abs(d));
    mc += rect((x - 2.5).toFixed(1), (d > 0 ? 1003 - h : 1001).toFixed(1), 5, h.toFixed(1), col);
    prev = d;
  }
  mc += curve(macdLine, "#3d3cef", 2.5) + curve(macdSignal, "#f0b040", 2.5);
  mc += rect(182, 986, 68, 39, "#1f2535");
  mc += `<path d="M186 991H211V1021H198V1002H186Z" fill="#d8dbe0"/><circle cx="220" cy="997" r="6" fill="#d8dbe0"/><path d="M231 991H246L236 1021H220Z" fill="#d8dbe0"/>`;
  document.getElementById("svgMacd").innerHTML = svg(911, 136, mc);

  // price scales
  const tag = (box, text, top, height, bg, extra) => {
    const el = document.createElement("div");
    el.className = "ax-tag " + (extra || "");
    el.textContent = text;
    el.style.top = top + "px";
    el.style.height = height + "px";
    el.style.background = bg;
    box.appendChild(el);
    return el;
  };
  const label = (box, text, centerY) => {
    const el = document.createElement("div");
    el.className = "ax-text";
    el.textContent = text;
    el.style.top = (centerY - 17) + "px";
    box.appendChild(el);
  };
  const axMain = document.getElementById("axMain");
  [["90,000.00",146],["85,000.00",217],["80,000.00",289],["75,000.00",360],["70,000.00",432],["65,000.00",504],["60,000.00",575],["55,000.00",647],["50,000.00",719]]
    .forEach(([t, y]) => label(axMain, t, y - 82));
  const last = tag(axMain, "87,787.39", 161 - 82, 62, RED);
  last.innerHTML = "87,787.39<br>21:22:17";
  last.style.lineHeight = "28px";
  last.style.paddingTop = "2px";
  tag(axMain, "85,587.76", 223 - 82, 34, "#e9784f");
  tag(axMain, "82,743.15", 257 - 82, 34, "#e9784f");
  tag(axMain, "72,024.37", 387 - 82, 34, "#4a6ef5");
  tag(axMain, "67,872.43", 446 - 82, 34, RED);
  tag(axMain, "64,039.70", 501 - 82, 34, "#6cb368");
  tag(axMain, "60,581.26", 551 - 82, 34, "#438fa5");
  tag(axMain, "59,744.16", 585 - 82, 34, "#438fa5");
  const vol = tag(axMain, "241", 758 - 82, 34, "#e8706a");
  vol.style.left = "86px";
  vol.style.width = "72px";
  vol.style.paddingRight = "13px";

  const axRsi = document.getElementById("axRsi");
  label(axRsi, "40.00", 877 - 795);
  tag(axRsi, "81.53", 0, 34, "#8a6cc4").style.width = "93px";
  tag(axRsi, "66.86", 34, 34, "#fbe864", "dark").style.width = "93px";

  const axMacd = document.getElementById("axMacd");
  label(axMacd, "0.00", 1002 - 911);
  tag(axMacd, "4,864.15", -19, 35, "#3a35f0").style.width = "132px";
  tag(axMacd, "2,937.07", 16, 34, "#f5bf4f", "dark").style.width = "132px";
  tag(axMacd, "1,667.05", 50, 34, "#5aab9f").style.width = "132px";

  const axTime = document.getElementById("axTime");
  months.forEach(([t, x]) => {
    const el = document.createElement("div");
    el.className = "time-text";
    el.textContent = t;
    el.style.left = (x - 2) + "px";
    axTime.appendChild(el);
  });
  document.getElementById("modeZ").style.left = "81px";
  document.getElementById("modeA").style.left = "2279px";
</script>

</body>
</html>
